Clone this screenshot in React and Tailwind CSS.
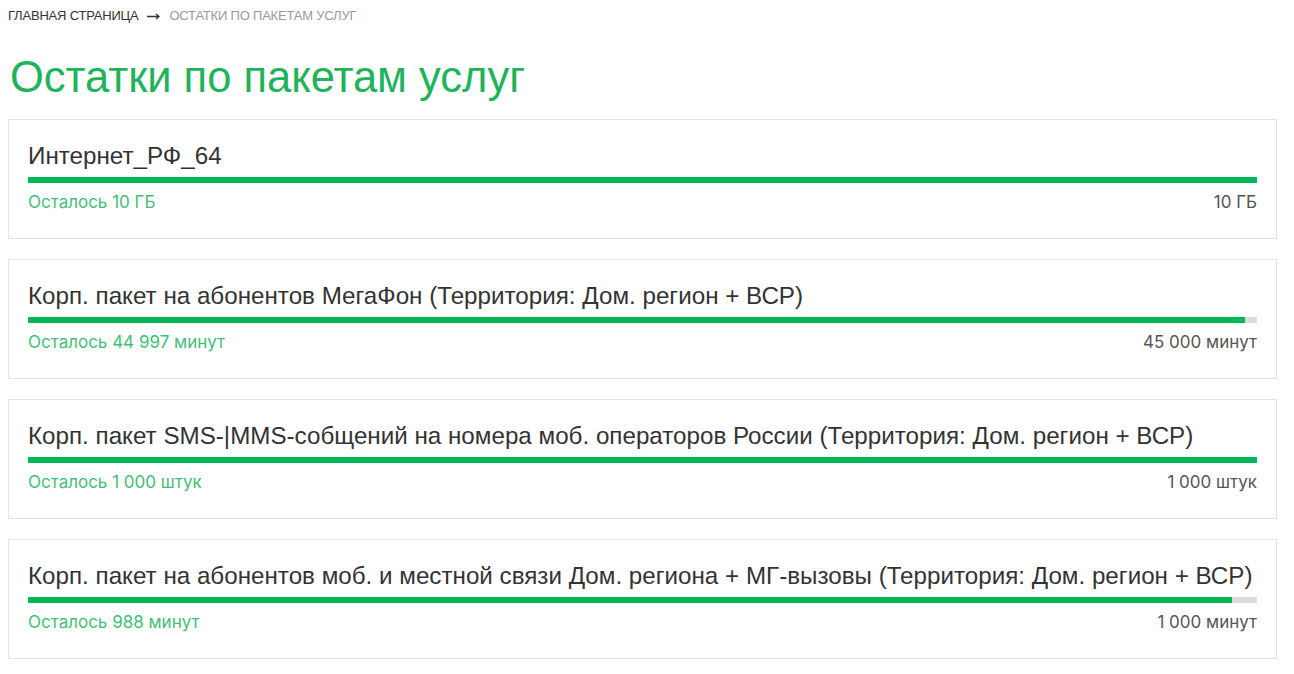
const packages = [
  { name: "Интернет_РФ_64", left: "Осталось 10 ГБ", total: "10 ГБ", pct: 100 },
  {
    name: "Корп. пакет на абонентов МегаФон (Территория: Дом. регион + ВСР)",
    left: "Осталось 44 997 минут",
    total: "45 000 минут",
    pct: 99,
  },
  {
    name: "Корп. пакет SMS-|MMS-собщений на номера моб. операторов России (Территория: Дом. регион + ВСР)",
    left: "Осталось 1 000 штук",
    total: "1 000 штук",
    pct: 100,
  },
  {
    name: "Корп. пакет на абонентов моб. и местной связи Дом. региона + МГ-вызовы (Территория: Дом. регион + ВСР)",
    left: "Осталось 988 минут",
    total: "1 000 минут",
    pct: 98,
  },
]

const PackageCard = ({ name, left, total, pct }) => (
  <div className="border border-[#e3e3e3] bg-white pl-[19px] pr-[19px] pt-[23px] pb-[26px]">
    <div className="whitespace-nowrap text-[24.2px] leading-[26px] text-[#333333]">{name}</div>
    <div className="mt-[8px] h-[6px] bg-[#dcdcdc]">
      <div className="h-full bg-[#00b956]" style={{ width: `${pct}%` }} />
    </div>
    <div className="mt-[9px] flex justify-between font-['Inter',sans-serif] text-[17px] leading-[20px]">
      <span className="text-[#3fbf78]">{left}</span>
      <span className="text-[#555555]">{total}</span>
    </div>
  </div>
)

export default function App() {
  return (
    <div className="min-h-screen bg-white pl-2 pr-[17px] pt-[7px] font-['Liberation_Sans',Arial,sans-serif]">
      <div className="flex items-center text-[13px] uppercase leading-[18px] tracking-[-0.2px]">
        <span className="text-[#333333]">Главная страница</span>
        <svg className="mx-[9px]" width="13" height="7" viewBox="0 0 13 7" fill="none">
          <path d="M0 3.5h11.5M9 1l3 2.5L9 6" stroke="#333333" strokeWidth="1.3" />
        </svg>
        <span className="text-[#9a9a9a]">Остатки по пакетам услуг</span>
      </div>
      <h1 className="mt-[28px] pl-[2px] text-[43.5px] leading-[48px] text-[#1fb35c]">Остатки по пакетам услуг</h1>
      <div className="mt-[18px] flex flex-col gap-[20px]">
        {packages.map((p) => (
          <PackageCard key={p.name} {...p} />
        ))}
      </div>
    </div>
  )
}
